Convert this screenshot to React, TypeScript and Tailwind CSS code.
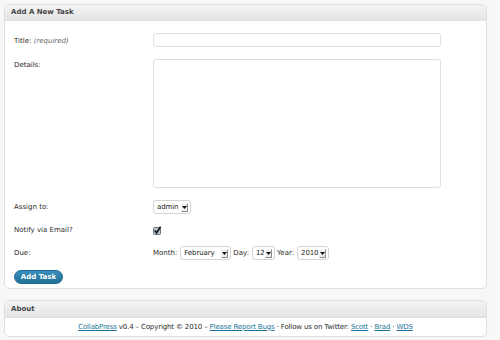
import React from "react";

function Sel({ label, className }: { label: string; className: string }) {
  return (
    <div
      className={
        "flex items-center h-[14px] border border-[#d4d4d4] rounded-[3px] bg-white pl-[3px] pr-[2px] text-[#222] tracking-[-0.1px] " +
        className
      }
    >
      <span className="flex-1 leading-none">{label}</span>
      <span className="flex items-center justify-center w-[7px] h-[9px] bg-[#ececec] border-r border-b border-[#8a8a8a] border-t border-l border-t-[#f8f8f8] border-l-[#f8f8f8]">
        <svg width="5" height="3" viewBox="0 0 5 3">
          <polygon points="0,0 5,0 2.5,3" fill="#111" />
        </svg>
      </span>
    </div>
  );
}

export default function App() {
  const font = { fontFamily: '"DejaVu Sans", sans-serif' };
  return (
    <div className="w-[500px] h-[340px] bg-[#f7f7f7] pt-[4px] pl-[4px] text-[7px] text-[#2b2b2b]" style={font}>
      <div className="w-[483px] border border-[#dfdfdf] rounded-[5px] bg-white overflow-hidden">
        <div className="h-[16px] flex items-center pl-[6px] bg-gradient-to-b from-[#f4f4f4] to-[#e4e4e4] border-b border-[#dfdfdf] font-bold text-[#464646]">
          Add A New Task
        </div>
        <div className="pl-[9px] pt-[12px] pb-[4px]">
          <div className="flex">
            <div className="w-[139px] pt-[3px]">
              Title: <i className="text-[#666]">(required)</i>
            </div>
            <div className="w-[288px] h-[14px] border border-[#dfdfdf] rounded-[3px] bg-white" />
          </div>
          <div className="flex mt-[12px]">
            <div className="w-[139px] pt-[1px]">Details:</div>
            <div className="w-[288px] h-[129px] border border-[#dfdfdf] rounded-[3px] bg-white" />
          </div>
          <div className="flex items-center mt-[12px]">
            <div className="w-[139px]">Assign to:</div>
            <Sel label="admin" className="w-[38px]" />
          </div>
          <div className="flex items-center mt-[10px] h-[13px]">
            <div className="w-[139px]">Notify via Email?</div>
            <svg width="9" height="9" viewBox="0 0 9 9">
              <rect x="0.5" y="1.5" width="7" height="7" rx="1" fill="#b9c3d3" stroke="#6b7280" />
              <path d="M1.8 4.6 L3.6 6.8 L7.6 0.6" fill="none" stroke="#111" strokeWidth="1.6" />
            </svg>
          </div>
          <div className="flex items-center mt-[9px]">
            <div className="w-[139px]">Due:</div>
            <span>Month:</span>
            <Sel label="February" className="w-[51px] ml-[3px]" />
            <span className="ml-[2px]">Day:</span>
            <Sel label="12" className="w-[23px] ml-[3px]" />
            <span className="ml-[2px]">Year:</span>
            <Sel label="2010" className="w-[32px] ml-[3px]" />
          </div>
          <div className="mt-[10px]">
            <button className="w-[49px] h-[14px] rounded-full bg-gradient-to-b from-[#3b8fbd] to-[#1f6f97] border border-[#1d6a91] text-white font-bold text-[7px] leading-none flex items-center justify-center" style={font}>
              Add Task
            </button>
          </div>
        </div>
      </div>
      <div className="w-[483px] mt-[11px] border border-[#dfdfdf] rounded-[5px] bg-white overflow-hidden">
        <div className="h-[17px] flex items-center pl-[6px] bg-gradient-to-b from-[#f4f4f4] to-[#e4e4e4] border-b border-[#dfdfdf] font-bold text-[#464646]">
          About
        </div>
        <div className="h-[18px] flex items-center justify-center tracking-[-0.15px]">
          <span>
            <a className="text-[#21759b] underline">CollabPress</a> v0.4 – Copyright © 2010 –{" "}
            <a className="text-[#21759b] underline">Please Report Bugs</a> · Follow us on Twitter:{" "}
            <a className="text-[#21759b] underline">Scott</a> · <a className="text-[#21759b] underline">Brad</a> ·{" "}
            <a className="text-[#21759b] underline">WDS</a>
          </span>
        </div>
      </div>
    </div>
  );
}
